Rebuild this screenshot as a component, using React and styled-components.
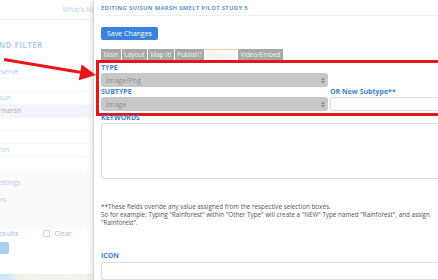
import React from 'react';
import styled, { createGlobalStyle } from 'styled-components';

const GlobalStyle = createGlobalStyle`
  html, body {
    margin: 0;
    padding: 0;
    background: #fff;
    overflow: hidden;
  }
  body {
    font-family: 'Open Sans', 'Liberation Sans', sans-serif;
  }
`;

const Page = styled.div`
  position: relative;
  display: flex;
  width: 438px;
  height: 280px;
  overflow: hidden;
`;

/* faded page behind the editor */
const Backdrop = styled.div`
  flex: 0 0 93px;
  overflow: hidden;
  opacity: 0.4;
`;

const Sidebar = styled.div`
  width: 200px;
  margin-left: -107px;
  display: flex;
  flex-direction: column;
`;

const TopNav = styled.div`
  height: 19px;
  border-bottom: 1px solid #ddd;
  display: flex;
  justify-content: flex-end;
  align-items: center;
  padding-right: 0;
  font-size: 7px;
  color: #3d80d8;
  margin-right: -8px;
`;

const SideHeading = styled.div`
  margin-top: 19px;
  padding-left: 64px;
  font-size: 8px;
  font-weight: 700;
  color: #3d80d8;
  letter-spacing: 0.4px;
`;

const SideRow = styled.div`
  height: 12px;
  line-height: 12px;
  padding-left: ${({ indent }) => indent || 60}px;
  font-size: ${({ small }) => (small ? 5 : 7)}px;
  color: ${({ dark, small }) => (dark ? '#333' : small ? '#999' : '#3d80d8')};
  background: ${({ active }) => (active ? '#dde7f6' : 'transparent')};
  border-bottom: 1px solid #eee;
  white-space: nowrap;
`;

const SideBox = styled.div`
  margin-top: 14px;
  height: 52px;
  background: #f3f3f3;
  padding: 6px 0 0 0;
  display: flex;
  flex-direction: column;
  gap: 4px;
`;

const ResultsRow = styled.div`
  display: flex;
  align-items: center;
  padding-left: 80px;
  gap: 25px;
  font-size: 7px;
  color: #3d80d8;
  font-weight: 600;
`;

const Clear = styled.span`
  display: flex;
  align-items: center;
  gap: 4px;
`;

const CheckBox = styled.span`
  width: 5px;
  height: 5px;
  border: 1px solid #999;
`;

const SideButton = styled.div`
  margin-top: 4px;
  margin-left: 70px;
  width: 46px;
  height: 12px;
  background: #3b82dc;
  border-radius: 2px;
`;

const MapStrip = styled.div`
  margin-top: 20px;
  height: 30px;
  background: linear-gradient(90deg, #8cc9ef 0 58%, #cfdcc0 62%, #e3e6d8 75%, #d9dfcc 100%);
`;

const Modal = styled.div`
  flex: 0 0 auto;
  width: 400px;
  background: #fff;
  border-left: 1px solid #d4d4d4;
  box-shadow: -2px 0 5px rgba(0, 0, 0, 0.12);
  padding-left: 7px;
  display: flex;
  flex-direction: column;
  align-items: flex-start;
`;

const Title = styled.div`
  align-self: stretch;
  height: 15px;
  line-height: 16px;
  border-bottom: 1px solid #eee;
  font-size: 5.8px;
  font-weight: 700;
  letter-spacing: 0.35px;
  color: #5f92d6;
  text-transform: uppercase;
`;

const SaveButton = styled.button`
  margin-top: 11px;
  height: 13px;
  padding: 0 6px;
  border: none;
  border-radius: 2px;
  background: #3b82dc;
  color: #fff;
  font-family: inherit;
  font-size: 7px;
  line-height: 13px;
`;

const Tabs = styled.div`
  margin-top: 9px;
  display: flex;
  gap: 1px;
`;

const Tab = styled.div`
  height: 11px;
  line-height: 11px;
  padding: 0 2.5px;
  font-size: 6.4px;
  color: ${({ active }) => (active ? '#eee' : '#f4f4f4')};
  background: ${({ active }) => (active ? '#f8f8f8' : '#a8a8a8')};
  border-top: ${({ active }) => (active ? '1px solid #f2c9a2' : 'none')};
  box-sizing: border-box;
`;

const Highlight = styled.div`
  align-self: stretch;
  margin-top: 3px;
  margin-left: -2px;
  padding: 0 0 2px 2px;
  outline: 3px solid #e8141c;
  display: grid;
  grid-template-columns: 227px 1fr;
  column-gap: 2px;
`;

const Label = styled.div`
  font-size: 7px;
  line-height: 9px;
  font-weight: 700;
  color: #3d80d8;
  margin-bottom: 1px;
  margin-top: ${({ top }) => top || 0}px;
  grid-column: ${({ col }) => col || 'auto'};
  white-space: nowrap;
`;

const Select = styled.div`
  height: 14px;
  border-radius: 3px;
  background: #c8c8c8;
  color: #8d8d8d;
  font-size: 7px;
  padding: 0 3px 0 5px;
  display: flex;
  align-items: center;
  justify-content: space-between;
  grid-column: 1;
`;

const TextInput = styled.div`
  height: ${({ h }) => h || 14}px;
  border: 1px solid #ddd;
  border-right: none;
  border-radius: 3px 0 0 3px;
  background: #fff;
  box-sizing: border-box;
  align-self: stretch;
  margin-top: ${({ top }) => top || 0}px;
`;

const Note = styled.p`
  margin: 24px 0 0;
  font-size: 6.3px;
  line-height: 8px;
  color: #555;
  width: 340px;
`;

const Arrow = styled.svg`
  position: absolute;
  left: 0;
  top: 0;
  pointer-events: none;
`;

const Updown = () => (
  <svg width="4" height="7" viewBox="0 0 4 7">
    <path d="M0 3 L2 0.5 L4 3 Z M0 4 L2 6.5 L4 4 Z" fill="#8a8a8a" />
  </svg>
);

const App = () => (
  <Page>
    <GlobalStyle />
    <Backdrop>
      <Sidebar>
        <TopNav>What&apos;s New</TopNav>
        <SideHeading>SEARCH AND FILTER</SideHeading>
        <div style={{ height: 16 }} />
        <SideRow indent={76}>Suisun Reserve</SideRow>
        <SideRow small>- - - - -</SideRow>
        <SideRow indent={96}>Suisun</SideRow>
        <SideRow dark active indent={84}>Suisun marsh</SideRow>
        <SideRow small>- - -</SideRow>
        <SideRow small>- - - - - -</SideRow>
        <SideRow indent={94}>Region</SideRow>
        <SideBox>
          <SideRow indent={76}>Display Settings</SideRow>
          <SideRow indent={92}>Layers</SideRow>
        </SideBox>
        <ResultsRow>
          <span>Apply Results</span>
          <Clear><CheckBox />Clear</Clear>
        </ResultsRow>
        <SideButton />
        <MapStrip />
      </Sidebar>
    </Backdrop>
    <Modal>
      <Title>Editing Suisun Marsh Smelt Pilot Study 5</Title>
      <SaveButton>Save Changes</SaveButton>
      <Tabs>
        <Tab>Main</Tab>
        <Tab>Layout</Tab>
        <Tab>Map It!</Tab>
        <Tab>Publish?</Tab>
        <Tab active>Organize</Tab>
        <Tab>Video/Embed</Tab>
      </Tabs>
      <Highlight>
        <Label col="1">TYPE</Label>
        <Select>Image/Png<Updown /></Select>
        <Label col="1">SUBTYPE</Label>
        <Label col="2">OR New Subtype**</Label>
        <Select>Image<Updown /></Select>
        <TextInput />
      </Highlight>
      <Label>KEYWORDS</Label>
      <TextInput h={61} />
      <Note>
        **These fields overide any value assigned from the respective selection boxes.
        <br />
        So for example: Typing &quot;Rainforest&quot; within &quot;Other Type&quot; will create a &quot;NEW&quot; Type named &quot;Rainforest&quot;, and assign
        <br />
        &quot;Rainforest&quot;.
      </Note>
      <Label top={24}>ICON</Label>
      <TextInput h={20} top={1} />
    </Modal>
    <Arrow width="438" height="280">
      <line x1="4" y1="59.5" x2="83" y2="72.8" stroke="#e8141c" strokeWidth="3" />
      <polygon points="96,75 81.6,64.4 78.8,80.2" fill="#e8141c" />
    </Arrow>
  </Page>
);

export default App;
